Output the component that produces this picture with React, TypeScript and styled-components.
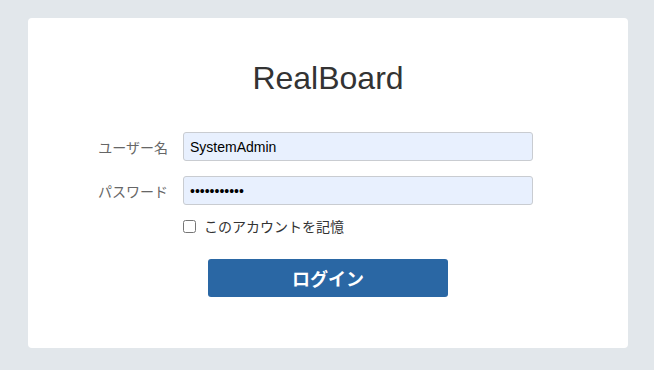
import styled, { createGlobalStyle } from 'styled-components';

const GlobalStyle = createGlobalStyle`
  html, body {
    margin: 0;
    padding: 0;
    background-color: #e2e7eb;
    font-family: 'Liberation Sans', Arial, 'Noto Sans CJK JP', sans-serif;
  }
`;

const App: React.FC = () => {
  return (
    <>
      <GlobalStyle />
      <Page>
        <Card>
          <Title>RealBoard</Title>
          <Form>
            <Label>ユーザー名</Label>
            <Input type='text' defaultValue='SystemAdmin' />
            <Label>パスワード</Label>
            <Input type='password' defaultValue='12345678901' />
            <Spacer />
            <Remember>
              <CheckBox type='checkbox' />
              このアカウントを記憶
            </Remember>
          </Form>
          <ButtonRow>
            <LoginButton>ログイン</LoginButton>
          </ButtonRow>
        </Card>
      </Page>
    </>
  );
};

const Page = styled.div`
  padding: 18px 26px 22px 28px;
`;

const Card = styled.div`
  box-sizing: border-box;
  width: 600px;
  height: 330px;
  background-color: #ffffff;
  border-radius: 4px;
  padding-top: 42px;
`;

const Title = styled.h1`
  margin: 0 0 36px 0;
  text-align: center;
  font-size: 32px;
  line-height: 36px;
  font-weight: normal;
  color: #333333;
`;

const Form = styled.div`
  display: grid;
  grid-template-columns: 70px 350px;
  column-gap: 15px;
  row-gap: 15px;
  padding-left: 70px;
  align-items: center;
`;

const Label = styled.label`
  font-size: 14px;
  color: #666666;
  text-align: right;
  white-space: nowrap;
  font-family: 'Noto Sans CJK JP', sans-serif;
`;

const Input = styled.input`
  box-sizing: border-box;
  width: 350px;
  height: 29px;
  margin: 0;
  padding: 0 6px;
  border: 1px solid #c9ccd1;
  border-radius: 3px;
  background-color: #e8f0fe;
  font-family: 'Liberation Sans', Arial, sans-serif;
  font-size: 14px;
  color: #000000;
  outline: none;
`;

const Spacer = styled.div``;

const Remember = styled.label`
  display: flex;
  align-items: center;
  gap: 8px;
  margin-top: -4px;
  font-size: 14px;
  color: #333333;
  font-family: 'Noto Sans CJK JP', sans-serif;
`;

const CheckBox = styled.input`
  width: 13px;
  height: 13px;
  margin: 0;
`;

const ButtonRow = styled.div`
  display: flex;
  justify-content: center;
  margin-top: 23px;
`;

const LoginButton = styled.button`
  width: 240px;
  height: 38px;
  border: none;
  border-radius: 3px;
  background-color: #2a67a4;
  color: #ffffff;
  font-size: 18px;
  font-weight: bold;
  font-family: 'Noto Sans CJK JP', sans-serif;
  cursor: pointer;
`;

export default App;
